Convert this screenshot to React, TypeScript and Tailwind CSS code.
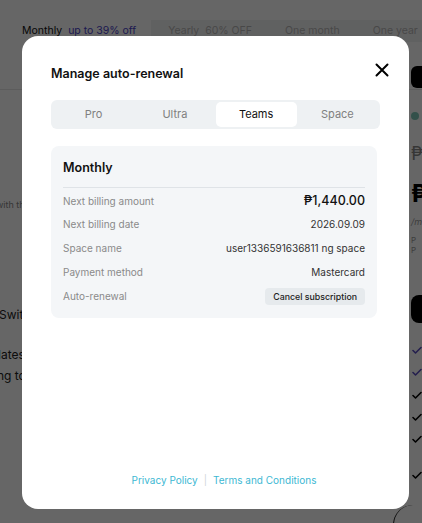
import React from "react";

const checks = [
  { y: "mt-[21px]", c: "text-[#5b4fc4]" },
  { y: "mt-[10px]", c: "text-[#5b4fc4]" },
  { y: "mt-[11px]", c: "text-black" },
  { y: "mt-[10px]", c: "text-black" },
  { y: "mt-[10px]", c: "text-black" },
  { y: "mt-[24px]", c: "text-black" },
];

function Check({ className }: { className: string }) {
  return (
    <svg viewBox="0 0 12 12" className={`block h-[12px] w-[12px] ${className}`} fill="none">
      <path d="M2 6.5l2.5 2.5L10 3.5" stroke="currentColor" strokeWidth="1.6" strokeLinecap="round" strokeLinejoin="round" />
    </svg>
  );
}

function Backdrop() {
  return (
    <div className="h-[523px] w-[422px] overflow-hidden bg-white font-['Inter',sans-serif]">
      {/* plan switcher row */}
      <div className="flex h-[90px] items-start border-b border-[#e5e5e5] pt-[20px]">
        <div className="flex h-[22px] shrink-0 items-center gap-[6px] whitespace-nowrap pl-[22px] text-[10.5px]">
          <span className="text-[#111]">Monthly</span>
          <span className="text-[#4b3fc9]">up to 39% off</span>
        </div>
        <div className="ml-[15px] flex h-[22px] flex-1 items-center whitespace-nowrap bg-[#f1f2f3] text-[10.5px] text-[#b5b5b5]">
          <span className="pl-[17px]">Yearly&nbsp;&nbsp;60% OFF</span>
          <span className="pl-[33px]">One month</span>
          <span className="pl-[33px]">One year</span>
        </div>
      </div>
      <div className="flex">
        {/* left column */}
        <div className="w-[395px] shrink-0 whitespace-nowrap text-[12px] text-[#222]">
          <div className="-ml-[4px] mt-[108px] text-[9px] text-[#888]">with th</div>
          <div className="-ml-[1px] mt-[94px]">Switch</div>
          <div className="-ml-[2px] mt-[22px]">latest</div>
          <div className="-ml-[6px] mt-[3px]">ing to</div>
        </div>
        {/* right pricing card */}
        <div className="min-w-0 flex-1 pl-[16px]">
          <div className="-mt-[24px] h-[22px] w-[40px] rounded-l-[6px] bg-black" />
          <div className="mt-[24px] h-[8px] w-[8px] rounded-full bg-[#7fc9b8]" />
          <div className="mt-[24px] text-[18px] leading-[20px] text-[#888]">₱</div>
          <div className="mt-[16px] text-[24px] font-bold leading-[28px] text-black">₱</div>
          <div className="mt-[8px] text-[9px] italic leading-[12px] text-[#999]">/m</div>
          <div className="mt-[7px] text-[8px] leading-[10px] text-[#999]">P</div>
          <div className="text-[8px] leading-[10px] text-[#999]">P</div>
          <div className="mt-[40px] h-[28px] w-[30px] rounded-l-[8px] bg-black" />
          {checks.map((k, i) => (
            <div key={i} className={k.y}>
              <Check className={k.c} />
            </div>
          ))}
          <div className="-ml-[18px] mt-[24px] h-[40px] w-[40px] rounded-tl-[20px] border-l border-[#222]" />
        </div>
      </div>
    </div>
  );
}

const rows: { label: string; value: React.ReactNode }[] = [
  {
    label: "Next billing amount",
    value: <span className="text-[12.5px] font-medium text-[#111]">₱1,440.00</span>,
  },
  { label: "Next billing date", value: "2026.09.09" },
  { label: "Space name", value: "user1336591636811 ng space" },
  { label: "Payment method", value: "Mastercard" },
];

export default function App() {
  return (
    <div className="relative h-[523px] w-[422px] overflow-hidden">
      <Backdrop />
      <div className="absolute inset-0 bg-black/60" />
      <div className="absolute left-[22px] top-[36px] flex h-[473px] w-[387px] flex-col rounded-[16px] bg-white px-[29px] font-['Inter',sans-serif]">
        <div className="flex items-center justify-between pt-[29px]">
          <h2 className="text-[12.5px] font-semibold text-[#111]">Manage auto-renewal</h2>
          <button className="-mr-[10px] -mt-[8px] text-black">
            <svg viewBox="0 0 16 16" className="h-[16px] w-[16px]" fill="none">
              <path d="M2.5 2.5l11 11M13.5 2.5l-11 11" stroke="currentColor" strokeWidth="2" strokeLinecap="round" />
            </svg>
          </button>
        </div>

        <div className="mt-[16px] grid h-[29px] grid-cols-4 rounded-[6px] bg-[#eef1f3] p-[2px] text-[11px]">
          {["Pro", "Ultra", "Teams", "Space"].map((t) => (
            <div
              key={t}
              className={
                t === "Teams"
                  ? "flex items-center justify-center rounded-[5px] bg-white text-[#111]"
                  : "flex items-center justify-center text-[#808080]"
              }
            >
              {t}
            </div>
          ))}
        </div>

        <div className="mr-[3px] mt-[17px] rounded-[8px] bg-[#f4f6f8] px-[12px] pb-[9px] pt-[13px]">
          <div className="border-b border-[#dfe3e7] pb-[9px] text-[12.5px] font-semibold text-[#111]">Monthly</div>
          <div className="mt-[2px] flex flex-col">
            {rows.map((r) => (
              <div key={r.label} className="flex h-[23.6px] items-center justify-between">
                <span className="text-[10px] text-[#8a8a8a]">{r.label}</span>
                <span className="text-[10px] text-[#333]">{r.value}</span>
              </div>
            ))}
            <div className="flex h-[25px] items-center justify-between">
              <span className="text-[10px] text-[#8a8a8a]">Auto-renewal</span>
              <button className="h-[17px] rounded-[4px] bg-[#e6eaed] px-[8px] text-[8.8px] font-medium text-[#222]">
                Cancel subscription
              </button>
            </div>
          </div>
        </div>

        <div className="mb-[21px] mt-auto flex items-center justify-center gap-[6px] pl-[17px] text-[10px] text-[#3db8d3]">
          <span>Privacy Policy</span>
          <span className="text-[#cfd5d9]">|</span>
          <span>Terms and Conditions</span>
        </div>
      </div>
    </div>
  );
}
